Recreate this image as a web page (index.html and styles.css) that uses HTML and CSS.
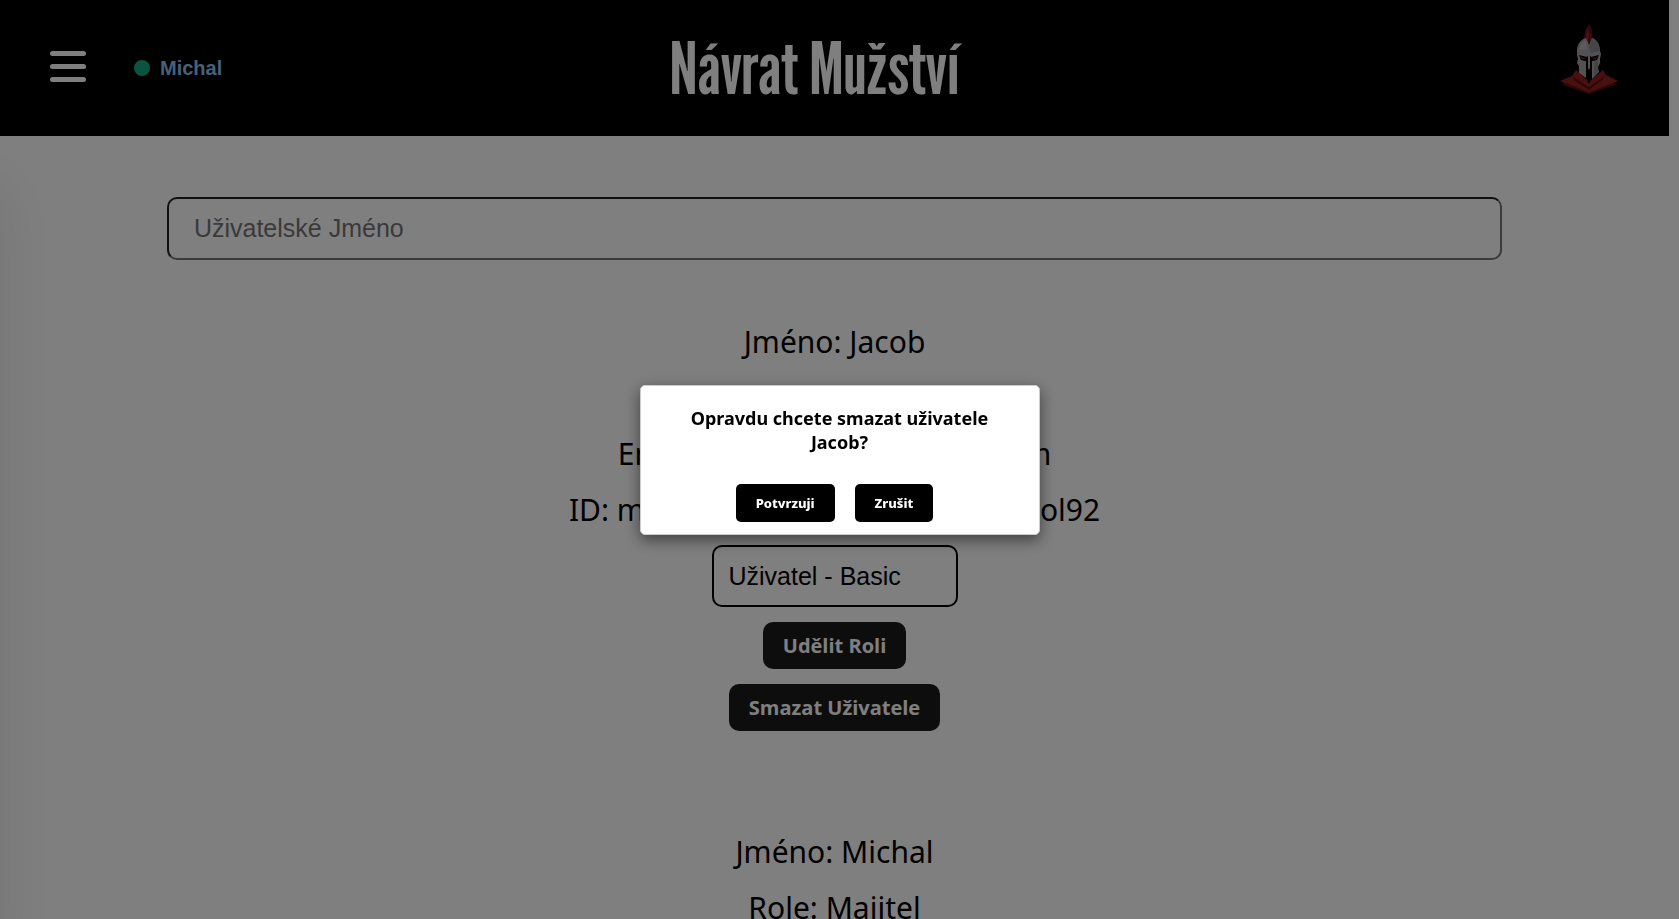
FILE: index.html
```html
<!DOCTYPE html>
<html lang="cs">
<head>
<meta charset="utf-8">
<meta name="viewport" content="width=device-width, initial-scale=1">
<title>Návrat Mužství</title>
<link rel="stylesheet" href="styles.css">
</head>
<body>
<div class="page">
  <header class="header">
    <div class="header-left">
      <button class="menu-button" type="button" aria-label="Menu">
        <span class="menu-bar"></span><span class="menu-bar"></span><span class="menu-bar"></span>
      </button>
      <a class="profile" href="#profil"><span class="status-dot"></span>Michal</a>
    </div>
    <h1 class="brand">Návrat Mužství</h1>
    <a class="logo-link" href="#domu" aria-label="Domů">
      <svg class="logo" viewBox="0 0 58 70" aria-hidden="true">
        <path fill="#5e1215" d="M26 23 24 14 25 7 27 3 29 0 31 3 32 7 32 14 31 23Z"/>
        <path fill="#9c2428" d="M28 21 26 12 28 4 29 10ZM30 20 30 8 31 13Z"/>
        <path fill="#a4a4a8" d="M17 27C17 19 22 15 26 14L29 21 32 14C36 15 40 20 40 27L41 30 40 35 40 39 38 43 39 48 32 55 32 37 37 36 39 31 31 33 29 30 27 33 19 31 21 36 26 37 26 54 19 49 19 42 17 39 18 35 17 31Z"/>
        <path fill="#8a8a90" d="M32 14C36 15 40 20 40 27L31 29 29 23ZM34 38 38 36 38 48 34 52Z"/>
        <path fill="#b8b8bc" d="M19 26C20 20 24 17 26 17L27 25Z"/>
        <path fill="#000" d="M20 32 27 34 28 32 30 32 31 34 38 32 36 36 32 37 32 54 29 58 26 54 26 37 22 36Z"/>
        <path fill="#a4a4a8" d="M28 30 30 30 30 44 29 46 28 44Z"/>
        <path fill="#7a2226" d="M20 32 26 35 22 35ZM32 35 38 32 36 35Z"/>
        <path fill="#94201f" d="M0 57 12 52 16 46 27 56 29 60 31 56 43 46 46 51 58 57 29 69Z"/>
        <path fill="#5a1010" d="M12 52 29 63 46 51 42 56 29 66 15 57ZM1 60 5 59 29 68 29 70ZM57 60 53 59 29 68 29 70Z"/>
      </svg>
    </a>
  </header>
  <div class="drawer"></div>
  <main class="content">
    <input class="search" type="text" placeholder="Uživatelské Jméno" aria-label="Uživatelské Jméno">
    <section class="user">
      <p>Jméno: Jacob</p>
      <p>Role: Uživatel</p>
      <p>Email: jacob.novak@email.com</p>
      <p>ID: mUx7TzKq4bWcRn5Ysd8eHpbol92</p>
      <select class="role" aria-label="Role">
        <option>Uživatel - Basic</option>
      </select>
      <button class="action" type="button">Udělit Roli</button>
      <button class="action" type="button">Smazat Uživatele</button>
    </section>
    <section class="user">
      <p>Jméno: Michal</p>
      <p>Role: Majitel</p>
    </section>
  </main>
</div>
<div class="overlay">
  <div class="dialog" role="dialog" aria-modal="true" aria-labelledby="dialog-title">
    <h2 class="dialog-title" id="dialog-title">Opravdu chcete smazat uživatele Jacob?</h2>
    <div class="dialog-buttons">
      <button class="dialog-button" type="button">Potvrzuji</button>
      <button class="dialog-button" type="button">Zrušit</button>
    </div>
  </div>
</div>
</body>
</html>
```
FILE: styles.css
```css
* { box-sizing: border-box; }

body {
  margin: 0;
  height: 100vh;
  overflow: hidden;
  background: #fff;
  color: #000;
  font-family: "Noto Sans", "Open Sans", sans-serif;
}

.page { margin-right: 10px; }

.header {
  display: grid;
  grid-template-columns: 1fr auto 1fr;
  align-items: center;
  height: 136px;
  padding: 0 50px;
  background: #000;
}

.header-left { display: flex; align-items: center; gap: 48px; }

.menu-button {
  display: flex;
  flex-direction: column;
  gap: 8px;
  width: 36px;
  padding: 0 0 4px;
  border: 0;
  background: none;
}

.menu-bar { width: 100%; height: 5px; border-radius: 3px; background: #fff; }

.profile {
  display: flex;
  align-items: center;
  gap: 10px;
  color: #90c0f0;
  font: bold 20px/24px "Liberation Sans", Arial, sans-serif;
  text-decoration: none;
}

.status-dot { width: 16px; height: 16px; border-radius: 50%; background: #18a884; }

.brand {
  margin: 0;
  padding-right: 40px;
  color: #fff;
  font: 400 72px/84px "League Gothic", "Roboto Condensed", "Liberation Sans Narrow", "Liberation Sans", sans-serif;
}

.logo-link { justify-self: end; padding: 0 1px 18px 0; }
.logo { display: block; width: 58px; height: 70px; }

.drawer {
  position: absolute;
  top: 136px;
  bottom: 0;
  left: -300px;
  width: 300px;
  box-shadow: 0 50px 60px rgba(0, 0, 0, 0.1);
}

.content {
  display: flex;
  flex-direction: column;
  align-items: center;
  padding-top: 61px;
}

.search {
  width: 80%;
  height: 63px;
  padding: 0 25px;
  border: 2px inset #767676;
  border-radius: 10px;
  background: transparent;
  font: 25px "Liberation Sans", Arial, sans-serif;
}

.search::placeholder { color: #757575; }

.user {
  display: flex;
  flex-direction: column;
  align-items: center;
  padding: 54px 0 24px;
}

.user p { margin: 0; font-size: 30px; line-height: 56px; }

.role {
  width: 246px;
  height: 62px;
  margin: 7px 0 15px;
  padding: 0 15px;
  border: 2px solid #000;
  border-radius: 10px;
  background: transparent;
  color: #000;
  font: 25px "Liberation Sans", Arial, sans-serif;
  appearance: none;
}

.action {
  margin-bottom: 15px;
  padding: 10px 20px;
  border: 0;
  border-radius: 10px;
  background: #1b1b1b;
  color: #fff;
  font: bold 20px/27px "Open Sans", "Noto Sans", sans-serif;
}

.overlay {
  position: fixed;
  inset: 0;
  display: flex;
  align-items: center;
  justify-content: center;
  background: rgba(0, 0, 0, 0.5);
}

.dialog {
  width: 400px;
  padding: 20px 40px 12px;
  border: 1px solid #ccc;
  border-radius: 5px;
  background: #fff;
  box-shadow: 0 5px 15px rgba(0, 0, 0, 0.5);
}

.dialog-title {
  margin: 0 0 30px;
  font-size: 18px;
  line-height: 24px;
  text-align: center;
}

.dialog-buttons {
  display: flex;
  justify-content: center;
  gap: 20px;
  padding-right: 10px;
}

.dialog-button {
  padding: 10px 20px;
  border: 0;
  border-radius: 5px;
  background: #000;
  color: #fff;
  font: 800 13px/18px "Noto Sans", "Open Sans", sans-serif;
}
```
